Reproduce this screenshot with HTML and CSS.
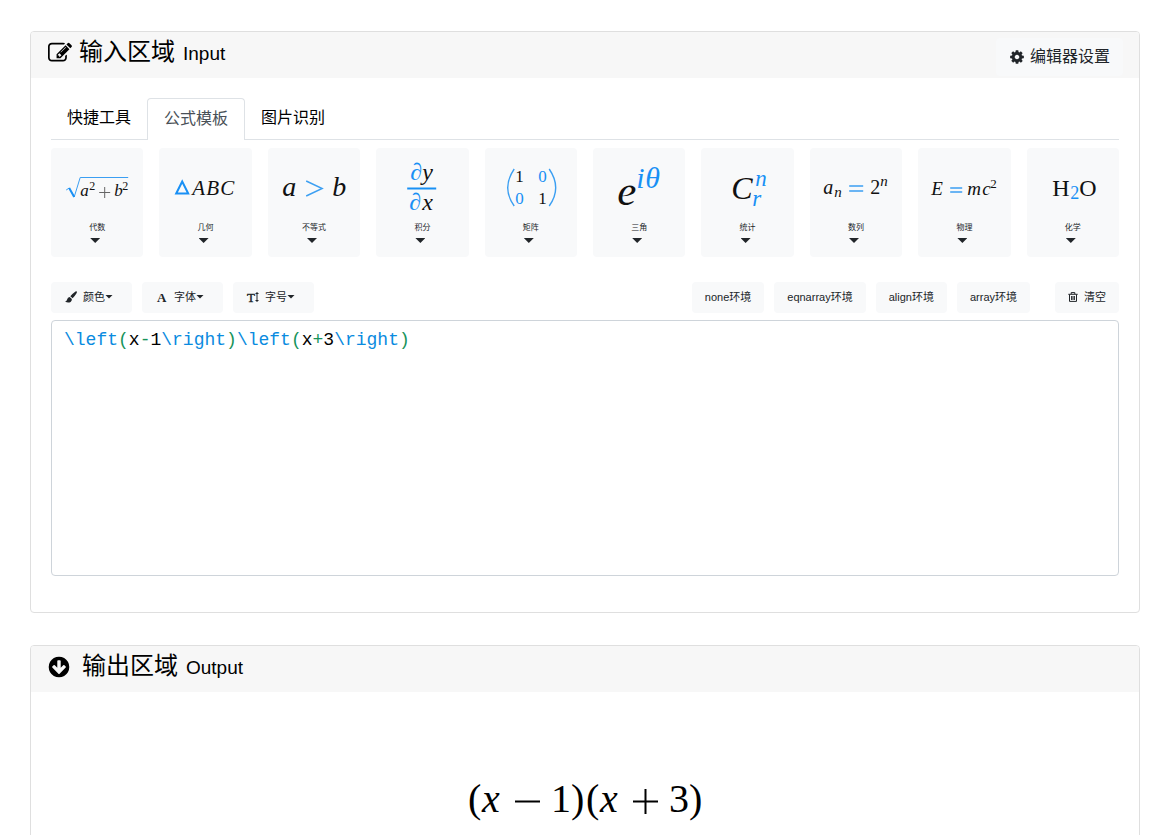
FILE: index.html
```html
<!DOCTYPE html>
<html lang="zh-CN">
<head>
<meta charset="utf-8">
<meta name="viewport" content="width=device-width, initial-scale=1">
<title>公式编辑器</title>
<link rel="stylesheet" href="styles.css">
</head>
<body>
<main class="page">
  <section class="card">
    <header class="card-header">
      <h2 class="title"><svg class="title-icon edit-icon" viewBox="0 0 1792 1792" aria-hidden="true"><path d="M888 1184l116-116-152-152-116 116v56h96v96h56zm440-720q-16-16-33 1l-350 350q-17 17-1 33t33-1l350-350q17-17 1-33zm80 594v190q0 119-84.500 203.500t-203.500 84.500h-832q-119 0-203.500-84.500t-84.500-203.500v-832q0-119 84.500-203.500t203.500-84.500h832q63 0 117 25 15 7 18 23 3 17-9 29l-49 49q-14 14-32 8-23-6-45-6h-832q-66 0-113 47t-47 113v832q0 66 47 113t113 47h832q66 0 113-47t47-113v-126q0-13 9-22l64-64q15-15 35-7t20 29zm-96-738l288 288-672 672h-288v-288zm444 132l-92 92-288-288 92-92q28-28 68-28t68 28l152 152q28 28 28 68t-28 68z"/></svg><span>输入区域</span><small>Input</small></h2>
      <button class="settings" type="button"><svg viewBox="0 0 1792 1792" aria-hidden="true"><path d="M1152 896q0-106-75-181t-181-75-181 75-75 181 75 181 181 75 181-75 75-181zm512-109v222q0 12-8 23t-20 13l-185 28q-19 54-39 91 35 50 107 138 10 12 10 25t-9 23q-27 37-99 108t-94 71q-12 0-26-9l-138-108q-44 23-91 38-16 136-29 186-7 28-36 28h-222q-14 0-24.500-8.500t-11.500-21.500l-28-184q-49-16-90-37l-141 107q-10 9-25 9-14 0-25-11-126-114-165-168-7-10-7-23 0-12 8-23 15-21 51-66.500t54-70.500q-27-50-41-99l-183-27q-13-2-21-12.500t-8-23.500v-222q0-12 8-23t19-13l186-28q14-46 39-92-40-57-107-138-10-12-10-24 0-10 9-23 26-36 98.500-107.500t94.500-71.500q13 0 26 10l138 107q44-23 91-38 16-136 29-186 7-28 36-28h222q14 0 24.500 8.500t11.500 21.500l28 184q49 16 90 37l142-107q9-9 24-9 13 0 25 10 129 119 165 170 7 8 7 22 0 12-8 23-15 21-51 66.500t-54 70.500q26 50 41 98l183 28q13 2 21 12.500t8 23.500z"/></svg>编辑器设置</button>
    </header>
    <div class="card-body">
      <nav class="tabs">
        <a class="tab" href="#tools">快捷工具</a>
        <a class="tab active" href="#templates" aria-current="page">公式模板</a>
        <a class="tab" href="#ocr">图片识别</a>
      </nav>
      <div class="templates" id="templates">
        <button class="tile" type="button">
          <svg class="formula" viewBox="0 0 92 64" aria-hidden="true"><path class="rule" d="M15 34l3-2 5 9L29 21.500H77"/><path class="rule thick" d="M18 32l5 9"/><g class="it"><text x="29" y="40" font-size="17">a</text><text x="63" y="40" font-size="17">b</text></g><text x="38" y="34" font-size="12">2</text><text x="71" y="34" font-size="12">2</text><path class="rule ink" d="M48 36.500H59M53.500 31V42"/></svg>
          <span class="tile-label">代数</span><span class="caret"></span>
        </button>
        <button class="tile" type="button">
          <svg class="formula" viewBox="0 0 92 64" aria-hidden="true"><path class="tri" d="M17 37.500L23 25.500 29 37.500Z"/><g class="it" font-size="21"><text x="33" y="39">A</text><text x="47" y="39">B</text><text x="61" y="39">C</text></g></svg>
          <span class="tile-label">几何</span><span class="caret"></span>
        </button>
        <button class="tile" type="button">
          <svg class="formula" viewBox="0 0 92 64" aria-hidden="true"><g class="it" font-size="28"><text x="14" y="40">a</text><text x="64" y="40">b</text></g><path class="rule heavy" d="M38 25L54 32.500 38 40"/></svg>
          <span class="tile-label">不等式</span><span class="caret"></span>
        </button>
        <button class="tile" type="button">
          <svg class="formula" viewBox="0 0 92 64" aria-hidden="true"><g class="it" font-size="24"><text class="blue" x="34" y="24">∂</text><text x="46" y="24">y</text><text class="blue" x="33" y="54">∂</text><text x="46" y="54">x</text></g><path class="rule thick" d="M31 32.500H60"/></svg>
          <span class="tile-label">积分</span><span class="caret"></span>
        </button>
        <button class="tile" type="button">
          <svg class="formula" viewBox="0 0 92 64" aria-hidden="true"><path class="rule heavy" d="M29 13Q16 32 29 50M64 13Q77 32 64 50"/><g font-size="17"><text x="30" y="26">1</text><text class="blue" x="53" y="26">0</text><text class="blue" x="30" y="48">0</text><text x="53" y="48">1</text></g></svg>
          <span class="tile-label">矩阵</span><span class="caret"></span>
        </button>
        <button class="tile" type="button">
          <svg class="formula" viewBox="0 0 92 64" aria-hidden="true"><g class="it"><text x="24" y="49" font-size="43">e</text><text class="blue" x="43" y="32" font-size="30">i</text><text class="blue" x="52" y="32" font-size="30">θ</text></g></svg>
          <span class="tile-label">三角</span><span class="caret"></span>
        </button>
        <button class="tile" type="button">
          <svg class="formula" viewBox="0 0 92 64" aria-hidden="true"><g class="it"><text x="30" y="43" font-size="32">C</text><text class="blue" x="54" y="30" font-size="23">n</text><text class="blue" x="51" y="50" font-size="23">r</text></g></svg>
          <span class="tile-label">统计</span><span class="caret"></span>
        </button>
        <button class="tile" type="button">
          <svg class="formula" viewBox="0 0 92 64" aria-hidden="true"><g class="it"><text x="13" y="38" font-size="20">a</text><text x="24" y="41" font-size="15">n</text><text x="70" y="30" font-size="15">n</text></g><text x="60" y="38" font-size="20">2</text><path class="rule heavy" d="M39 30H53M39 35H53"/></svg>
          <span class="tile-label">数列</span><span class="caret"></span>
        </button>
        <button class="tile" type="button">
          <svg class="formula" viewBox="0 0 92 64" aria-hidden="true"><g class="it" font-size="19"><text x="13" y="39">E</text><text x="49" y="39">m</text><text x="64" y="39">c</text></g><text x="72" y="32" font-size="13">2</text><path class="rule heavy" d="M32 32H44M32 36H44"/></svg>
          <span class="tile-label">物理</span><span class="caret"></span>
        </button>
        <button class="tile" type="button">
          <svg class="formula" viewBox="0 0 92 64" aria-hidden="true"><g font-size="24"><text x="25" y="40">H</text><text x="52" y="40">O</text></g><text class="blue" x="43" y="43" font-size="18">2</text></svg>
          <span class="tile-label">化学</span><span class="caret"></span>
        </button>
      </div>

      <div class="toolbar">
        <div class="group">
          <button class="btn drop" type="button"><svg class="btn-icon" viewBox="0 0 12 12" aria-hidden="true"><path d="M11.500.3q.8.500.2 1.600Q9.800 5 7.600 7.200L5.300 5.300Q7.500 2.500 10.500.4q.6-.3 1 -.1zM4.700 6l2.200 1.900q0 1.900-1.300 3Q3 12.400 0 10.500q1.700-.3 2-1.800Q2.600 6.200 4.700 6z"/></svg>颜色<span class="caret small"></span></button>
          <button class="btn drop" type="button"><svg class="btn-icon" viewBox="0 0 12 12" aria-hidden="true"><text class="bold" x="1" y="11" font-size="13">A</text></svg>字体<span class="caret small"></span></button>
          <button class="btn drop" type="button"><svg class="btn-icon" viewBox="0 0 12 12" aria-hidden="true"><text class="medium" x="0" y="11" font-size="13">T</text><path d="M10 1l2 2h-1.500v6H12l-2 2-2-2h1.500V3H8z"/></svg>字号<span class="caret small"></span></button>
        </div>
        <div class="group">
          <button class="btn" type="button">none环境</button>
          <button class="btn" type="button">eqnarray环境</button>
          <button class="btn" type="button">align环境</button>
          <button class="btn" type="button">array环境</button>
          <button class="btn clear" type="button"><svg class="btn-icon trash" viewBox="0 0 10 10" aria-hidden="true"><path d="M.3 2.300H9.700M3.200 2V.6H6.800V2M1.500 2.500V9.400H8.500V2.500M3.600 4V8M5 4V8M6.400 4V8"/></svg>清空</button>
        </div>
      </div>

      <div class="editor">
        <pre class="highlight" aria-hidden="true"><span class="cmd">\left</span><span class="op">(</span>x<span class="op">-</span>1<span class="cmd">\right</span><span class="op">)</span><span class="cmd">\left</span><span class="op">(</span>x<span class="op">+</span>3<span class="cmd">\right</span><span class="op">)</span></pre>
        <textarea class="source" aria-label="输入区域" spellcheck="false">\left(x-1\right)\left(x+3\right)</textarea>
      </div>
    </div>
  </section>

  <section class="card">
    <header class="card-header">
      <h2 class="title output-title"><svg class="title-icon" viewBox="0 0 1792 1792" aria-hidden="true"><path d="M1412 897q0-27-18-45l-91-91q-18-18-45-18t-45 18l-189 189v-502q0-26-19-45t-45-19h-128q-26 0-45 19t-19 45v502l-189-189q-19-19-45-19t-45 19l-91 91q-18 18-18 45t18 45l362 362 91 91q18 18 45 18t45-18l91-91 362-362q18-18 18-45zm252-1q0 209-103 385.500t-279.500 279.500-385.500 103-385.500-103-279.500-279.500-103-385.500 103-385.500 279.500-279.500 385.500-103 385.500 103 279.500 279.500 103 385.500z"/></svg><span>输出区域</span><small>Output</small></h2>
    </header>
    <div class="output">
      <svg class="result" viewBox="0 0 240 60" role="img" aria-label="(x−1)(x+3)"><g font-size="40"><text x="3" y="41">(</text><text class="it" x="17" y="41">x</text><text x="86" y="41">1</text><text x="106" y="41">)</text><text x="121" y="41">(</text><text class="it" x="135" y="41">x</text><text x="204" y="41">3</text><text x="224" y="41">)</text></g><path class="sign" d="M50 30.500H75M168 30.500H193M180.500 18V43"/></svg>
    </div>
  </section>
</main>
</body>
</html>
```

FILE: styles.css
```css
* { box-sizing: border-box; }

body {
  margin: 0;
  background: #fff;
  color: #000;
  font-family: "Liberation Sans", "Noto Sans CJK SC", sans-serif;
  font-size: 16px;
  line-height: 24px;
}

button { font-family: inherit; border: 0; cursor: pointer; color: #212529; background: #f8f9fa; }

.page {
  display: flex;
  flex-direction: column;
  gap: 32px;
  padding: 31px 9px 0 30px;
}

.card { border: 1px solid #dfdfdf; border-radius: 4px; }

.card-header {
  display: flex;
  justify-content: space-between;
  align-items: flex-start;
  height: 46px;
  padding: 0 16px 0 17px;
  background: #f7f7f7;
  border-radius: 3px 3px 0 0;
}

.title {
  display: flex;
  align-items: baseline;
  gap: 8px;
  margin: 0;
  padding-top: 4px;
  font-size: 24px;
  font-weight: 400;
  line-height: 32px;
}
.title small { font-size: 19px; }
.title-icon { width: 24px; height: 24px; align-self: center; margin-right: -1px; fill: #000; }
.edit-icon { width: 24px; height: 24px; }
.output-title .title-icon { margin-left: -1px; margin-right: 3px; }

.settings {
  display: flex;
  align-items: center;
  gap: 5px;
  margin-top: 6px;
  padding: 7px 13px;
  border-radius: 4px;
  font-size: 16px;
  line-height: 24px;
}
.settings svg { width: 16px; height: 16px; fill: #212529; }

.card-body { padding: 20px 20px 36px; }

.tabs { display: flex; border-bottom: 1px solid #dee2e6; }
.tab {
  padding: 7px 15px 9px;
  border: 1px solid transparent;
  border-bottom: 0;
  border-radius: 4px 4px 0 0;
  color: #000;
  text-decoration: none;
}
.tab.active {
  margin-bottom: -1px;
  padding: 8px 16px 9px;
  border-color: #dee2e6;
  background: #fff;
  color: #495057;
}

.templates {
  display: grid;
  grid-template-columns: repeat(10, minmax(0, 1fr));
  gap: 16px;
  margin-top: 8px;
}
.tile {
  display: flex;
  flex-direction: column;
  align-items: center;
  padding: 8px 0 14px;
  border-radius: 4px;
}
.formula { width: 100%; height: 64px; }
.tile-label { margin-top: 2px; font-size: 8px; line-height: 12px; }
.caret {
  width: 10px;
  height: 5px;
  margin: 4px 4px 0 0;
  background: #212529;
  clip-path: polygon(0 0, 100% 0, 50% 100%);
}
.caret.small { width: 8px; height: 4px; margin: 0; }

svg text { font-family: "Liberation Serif", serif; fill: #111; }
svg .it { font-style: italic; }
svg .bold { font-weight: 700; fill: #212529; }
svg .medium { fill: #212529; stroke: #212529; stroke-width: 0.4; }
svg .blue { fill: #1890f5; }
.rule { fill: none; stroke: #3b9ff2; stroke-width: 1; }
.rule.heavy { stroke-width: 1.4; }
.rule.thick { stroke: #1890f5; stroke-width: 2; }
.rule.ink { stroke: #666; }
.tri { fill: none; stroke: #1890f5; stroke-width: 2; }
.sign { fill: none; stroke: #000; stroke-width: 2; }

.toolbar { display: flex; justify-content: space-between; margin-top: 25px; }
.group { display: flex; gap: 10px; }
.btn {
  display: flex;
  align-items: center;
  justify-content: center;
  height: 31px;
  padding: 0 13px 2px;
  border-radius: 4px;
  font-size: 11px;
  line-height: 16px;
}
.btn.drop { padding: 0 19px 2px 14px; }
.btn.clear { margin-left: 15px; }
.btn-icon { width: 12px; height: 12px; margin-right: 6px; fill: #212529; overflow: visible; }
.btn-icon.trash { width: 10px; height: 10px; fill: none; stroke: #212529; stroke-width: 1; }

.editor {
  display: grid;
  height: 256px;
  margin-top: 7px;
  border: 1px solid #ced4da;
  border-radius: 4px;
}
.highlight, .source {
  grid-area: 1 / 1;
  width: 100%;
  height: 100%;
  margin: 0;
  padding: 6px 12px;
  border: 0;
  font-family: "Liberation Mono", monospace;
  font-size: 18px;
  line-height: 26px;
  white-space: pre-wrap;
}
.source {
  resize: none;
  outline: 0;
  background: transparent;
  color: transparent;
  caret-color: #000;
}
.cmd { color: #0a8be0; }
.op { color: #17935a; }

.output { display: flex; justify-content: center; padding: 79px 20px 60px; }
.result { width: 240px; height: 60px; }
.result text { fill: #000; }
```
